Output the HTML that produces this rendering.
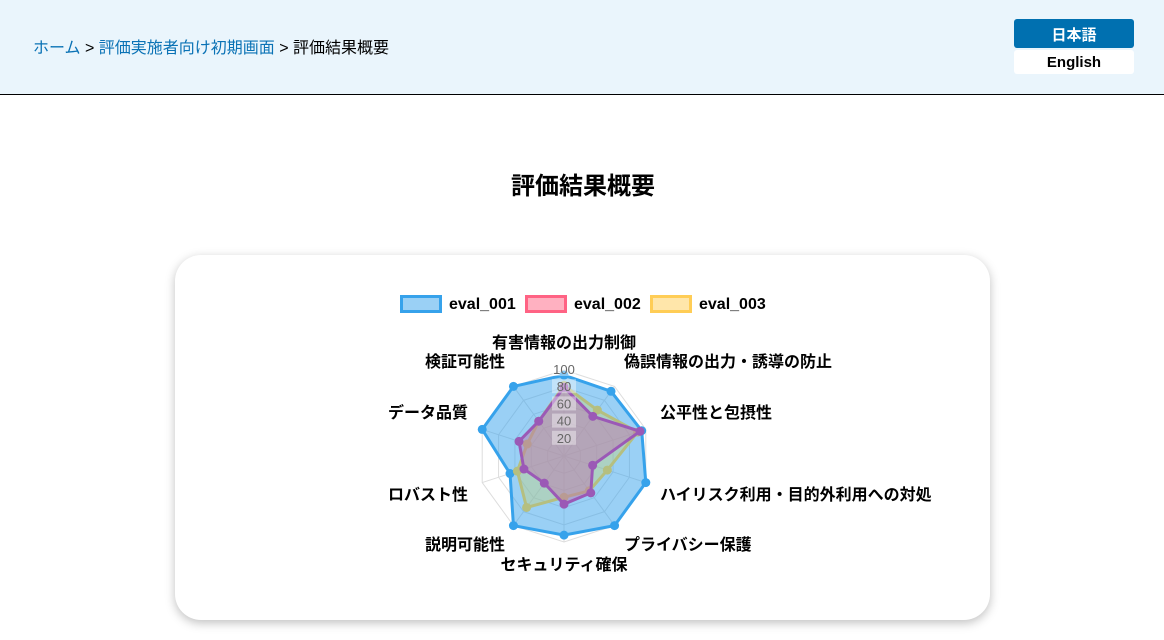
<!DOCTYPE html>
<html><head><meta charset="utf-8"><style>
body{margin:0;width:1164px;height:640px;overflow:hidden;background:#fff;font-family:"Liberation Sans","Noto Sans CJK JP",sans-serif;position:relative}
.hdr{position:absolute;left:0;top:0;width:1164px;height:94px;background:#eaf5fc;border-bottom:1px solid #000}
.bc{position:absolute;left:33px;top:34px;font-size:16px;color:#000}
.bc a{color:#0a72b5;text-decoration:none}
.ja{position:absolute;left:1014px;top:19px;width:120px;height:29px;background:#0070b0;color:#fff;font-weight:bold;font-size:15px;text-align:center;line-height:33px;border-radius:3px}
.en{position:absolute;left:1014px;top:50px;width:120px;height:24px;background:#fff;color:#000;font-weight:bold;font-size:15px;text-align:center;line-height:25px;border-radius:3px}
h1{position:absolute;left:0;width:1166px;top:166px;margin:0;text-align:center;font-size:24px;font-weight:bold}
.card{position:absolute;left:175px;top:255px;width:815px;height:365px;border-radius:26px;background:#fff;box-shadow:0 3px 10px rgba(0,0,0,0.25)}
svg{position:absolute;left:0;top:0}
</style></head><body>
<div class="hdr"><div class="bc"><a>ホーム</a> &gt; <a>評価実施者向け初期画面</a> &gt; 評価結果概要</div>
<div class="ja">日本語</div><div class="en">English</div></div>
<h1>評価結果概要</h1>
<div class="card"></div>
<svg id="s" width="1164" height="640" font-family="Liberation Sans, Noto Sans CJK JP, sans-serif"></svg>
<script>
var cx=564,cy=456,R=86,N=10;
function pt(i,v){var a=(-90+36*i)*Math.PI/180;return [cx+R*v/100*Math.cos(a),cy+R*v/100*Math.sin(a)];}
var h='';
for(var k=1;k<=5;k++){var p=[];for(var i=0;i<N;i++)p.push(pt(i,k*20).join(','));h+='<polygon points="'+p.join(' ')+'" fill="none" stroke="#ddd" stroke-width="1"/>';}
for(var i=0;i<N;i++){var q=pt(i,100);h+='<line x1="'+cx+'" y1="'+cy+'" x2="'+q[0]+'" y2="'+q[1]+'" stroke="#ddd"/>';}
var ds=[
[[94,93,95,100,100,92,100,66,100,100],'rgba(54,162,235,0.5)','#36a2eb'],
[[82,66,90,53,50,48,74,57,45,50],'rgba(200,210,120,0.4)','#b5bf80'],
[[80,57,93,35,53,56,39,49,55,50],'rgba(190,110,170,0.45)','#9b59b6']];
ds.forEach(function(d){var p=[];for(var i=0;i<N;i++)p.push(pt(i,d[0][i]));
h+='<polygon points="'+p.map(function(x){return x.join(',')}).join(' ')+'" fill="'+d[1]+'" stroke="'+d[2]+'" stroke-width="3"/>';
p.forEach(function(x){h+='<circle cx="'+x[0]+'" cy="'+x[1]+'" r="4.5" fill="'+d[2]+'"/>';});});
[20,40,60,80,100].forEach(function(v){var y=cy-R*v/100;h+='<rect x="'+(cx-12)+'" y="'+(y-8)+'" width="24" height="14" fill="rgba(255,255,255,0.4)"/><text x="'+cx+'" y="'+(y+4)+'" font-size="13" fill="#666" text-anchor="middle">'+v+'</text>';});
var L=[['有害情報の出力制御',564,348,'middle'],['偽誤情報の出力・誘導の防止',624,367,'start'],['公平性と包摂性',660,418,'start'],['ハイリスク利用・目的外利用への対処',660,500,'start'],['プライバシー保護',624,550,'start'],['セキュリティ確保',564,570,'middle'],['説明可能性',505,550,'end'],['ロバスト性',468,500,'end'],['データ品質',468,418,'end'],['検証可能性',505,367,'end']];
L.forEach(function(l){h+='<text x="'+l[1]+'" y="'+l[2]+'" font-size="16" font-weight="bold" text-anchor="'+l[3]+'">'+l[0]+'</text>';});
var lg=[[400,'rgba(54,162,235,0.5)','#36a2eb','eval_001'],[525,'rgba(255,99,132,0.5)','#ff6384','eval_002'],[650,'rgba(255,205,86,0.5)','#ffcd56','eval_003']];
lg.forEach(function(g){h+='<rect x="'+(g[0]+1.5)+'" y="296.5" width="39" height="15" fill="'+g[1]+'" stroke="'+g[2]+'" stroke-width="3"/><text x="'+(g[0]+49)+'" y="309" font-size="16" font-weight="bold">'+g[3]+'</text>';});
document.getElementById('s').innerHTML=h;
</script>
</body></html>
